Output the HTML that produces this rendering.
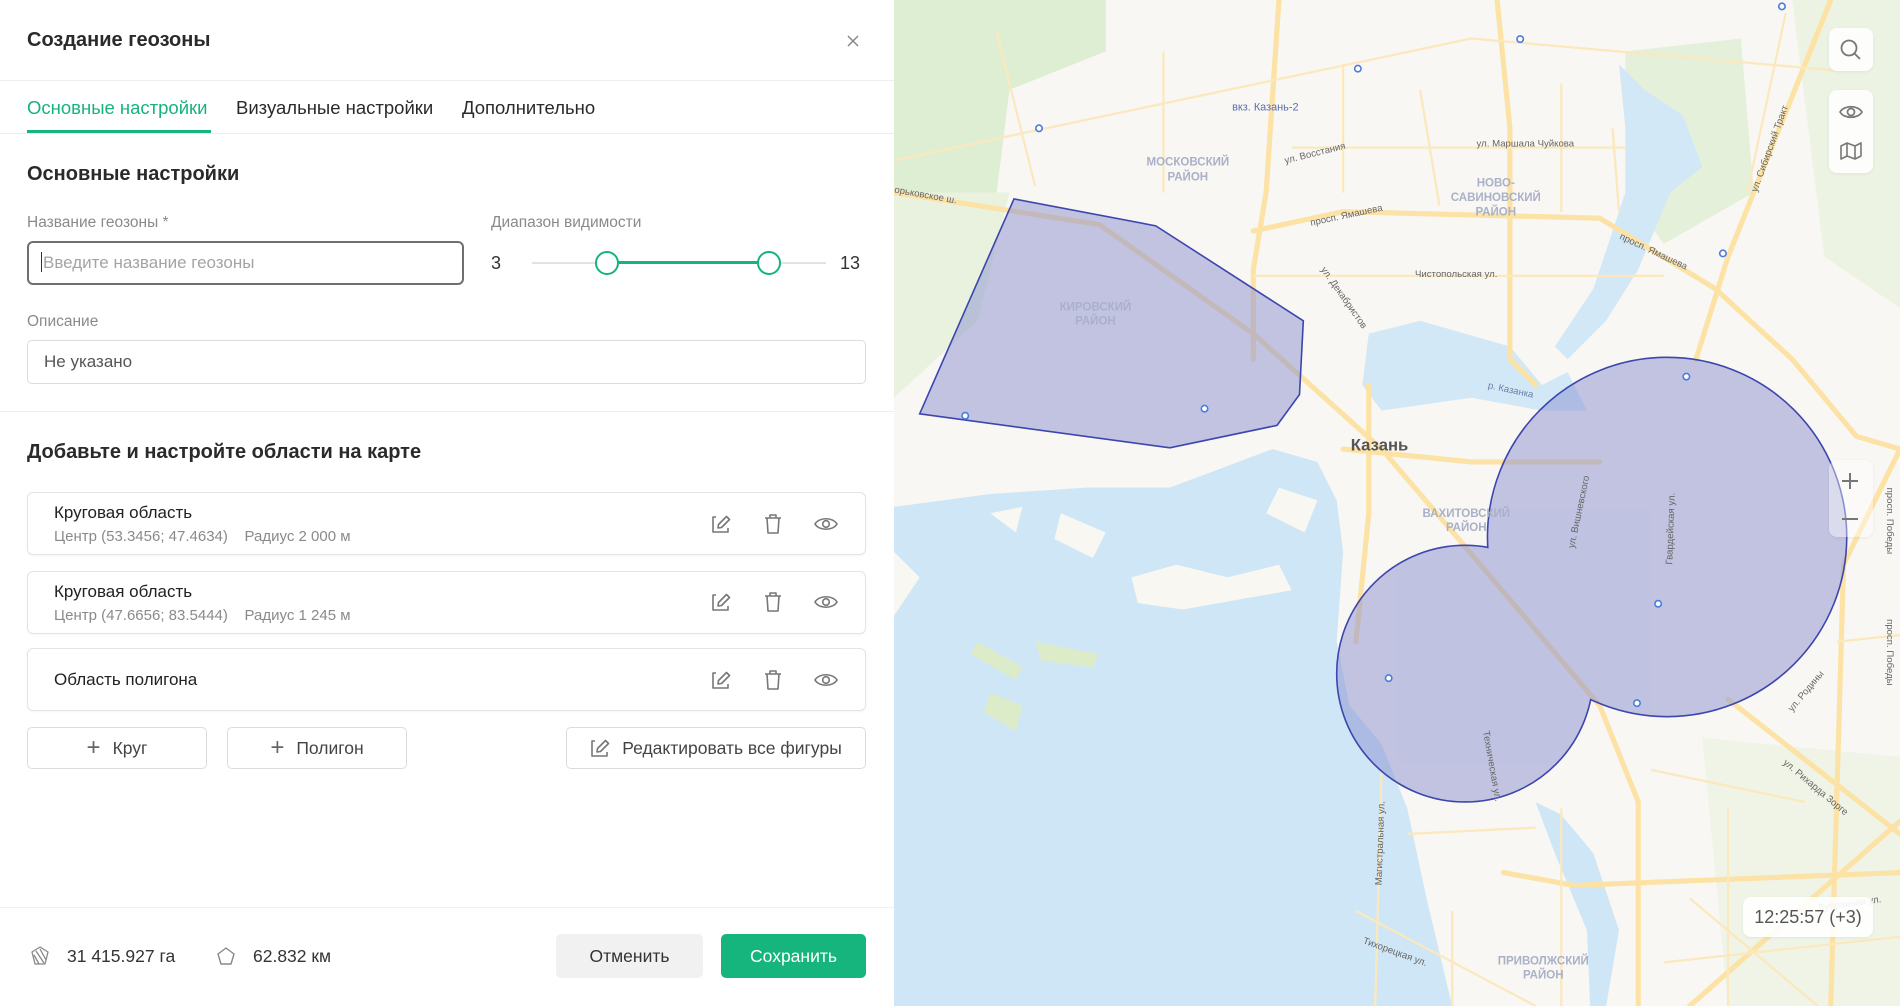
<!DOCTYPE html>
<html><head><meta charset="utf-8"><style>
*{box-sizing:border-box;margin:0;padding:0}
body{width:1900px;height:1006px;overflow:hidden;font-family:"Liberation Sans",sans-serif;background:#fff;position:relative;color:#222}
.a{position:absolute;white-space:nowrap}
.panel{position:absolute;left:0;top:0;width:894px;height:1006px;background:#fff}
.hr{position:absolute;left:0;width:894px;height:1px;background:#eeeeee}
.lbl{font-size:15.5px;color:#8a8a8a}
.inp{position:absolute;border:1px solid #dcdcdc;border-radius:5px;background:#fff}
.card{position:absolute;left:27px;width:839px;height:63px;border:1px solid #e4e4e4;border-radius:6px;box-shadow:0 1px 2px rgba(0,0,0,.04)}
.ct{position:absolute;left:26px;font-size:17px;color:#222}
.cs{position:absolute;left:26px;top:35px;font-size:15px;color:#8a8a8a}
.btn{position:absolute;top:727px;height:42px;border:1px solid #dcdcdc;border-radius:5px;font-size:17.5px;color:#444;display:flex;align-items:center;justify-content:center;gap:12px}
.mc{position:absolute;background:rgba(255,255,255,.9);border-radius:8px;box-shadow:0 1px 3px rgba(0,0,0,.06)}
</style></head><body>
<div class="panel">
 <div class="a" style="left:27px;top:29px;font-size:20px;font-weight:bold;color:#2a2a2a">Создание геозоны</div>
 <svg class="a" style="left:846px;top:34px" width="14" height="14" viewBox="0 0 14 14"><path d="M2 2L12 12M12 2L2 12" stroke="#888" stroke-width="1.5"/></svg>
 <div class="hr" style="top:80px"></div>
 <div class="a" style="left:27px;top:97px;font-size:18.5px;color:#17b37c">Основные настройки</div>
 <div class="a" style="left:27px;top:130px;width:184px;height:3px;background:#17b37c"></div>
 <div class="a" style="left:236px;top:97px;font-size:18.5px;color:#2a2a2a">Визуальные настройки</div>
 <div class="a" style="left:462px;top:97px;font-size:18.5px;color:#2a2a2a">Дополнительно</div>
 <div class="hr" style="top:133px"></div>
 <div class="a" style="left:27px;top:163px;font-size:20px;font-weight:bold;color:#2a2a2a">Основные настройки</div>
 <div class="a lbl" style="left:27px;top:214px">Название геозоны *</div>
 <div class="inp" style="left:27px;top:241px;width:437px;height:44px;border:2px solid #6f6f6f;border-radius:6px"></div>
 <div class="a" style="left:41px;top:252px;width:1px;height:20px;background:#333"></div>
 <div class="a" style="left:43px;top:253px;font-size:17px;color:#a4a4a4">Введите название геозоны</div>
 <div class="a lbl" style="left:491px;top:214px">Диапазон видимости</div>
 <div class="a" style="left:491px;top:253px;font-size:18px;color:#333">3</div>
 <div class="a" style="left:532px;top:262px;width:294px;height:2px;background:#e2e2e2"></div>
 <div class="a" style="left:607px;top:261px;width:162px;height:3px;background:#17b37c"></div>
 <div class="a" style="left:595px;top:251px;width:24px;height:24px;border:2.5px solid #17b37c;border-radius:50%;background:#fff"></div>
 <div class="a" style="left:757px;top:251px;width:24px;height:24px;border:2.5px solid #17b37c;border-radius:50%;background:#fff"></div>
 <div class="a" style="left:840px;top:253px;font-size:18px;color:#333">13</div>
 <div class="a lbl" style="left:27px;top:313px">Описание</div>
 <div class="inp" style="left:27px;top:340px;width:839px;height:44px"></div>
 <div class="a" style="left:44px;top:352px;font-size:17px;color:#555">Не указано</div>
 <div class="hr" style="top:411px"></div>
 <div class="a" style="left:27px;top:441px;font-size:20px;font-weight:bold;color:#2a2a2a">Добавьте и настройте области на карте</div>

 <div class="card" style="top:492px"><div class="ct" style="top:10px">Круговая область</div><div class="cs">Центр (53.3456; 47.4634)&nbsp;&nbsp;&nbsp;&nbsp;Радиус 2 000 м</div></div>
 <div class="card" style="top:571px"><div class="ct" style="top:10px">Круговая область</div><div class="cs">Центр (47.6656; 83.5444)&nbsp;&nbsp;&nbsp;&nbsp;Радиус 1 245 м</div></div>
 <div class="card" style="top:648px"><div class="ct" style="top:21px">Область полигона</div></div>

 <svg class="a" style="left:0;top:0" width="894" height="1006">
  <defs>
   <g id="ed"><path d="M-5 -7H-8V8H7V4" fill="none" stroke="#777" stroke-width="1.6" stroke-linejoin="round"/><path d="M-3 4L-2.5 0.5L5.5 -7.5L8.5 -4.5L0.5 3.5Z" fill="none" stroke="#777" stroke-width="1.6" stroke-linejoin="round"/></g>
   <g id="tr"><path d="M-8 -6H8M-3 -6V-9H3V-6M-6 -6L-5 9H5L6 -6" fill="none" stroke="#777" stroke-width="1.6" stroke-linejoin="round"/></g>
   <g id="ey"><path d="M-11 0C-7 -7 7 -7 11 0C7 7 -7 7 -11 0Z" fill="none" stroke="#777" stroke-width="1.6"/><circle r="3.3" fill="none" stroke="#777" stroke-width="1.6"/></g>
  </defs>
  <use href="#ed" x="721" y="524"/><use href="#tr" x="773" y="524"/><use href="#ey" x="826" y="524"/>
  <use href="#ed" x="721" y="602"/><use href="#tr" x="773" y="602"/><use href="#ey" x="826" y="602"/>
  <use href="#ed" x="721" y="680"/><use href="#tr" x="773" y="680"/><use href="#ey" x="826" y="680"/>
 </svg>

 <div class="btn" style="left:27px;width:180px"><span style="font-size:24px;font-weight:300;color:#666">+</span>Круг</div>
 <div class="btn" style="left:227px;width:180px"><span style="font-size:24px;font-weight:300;color:#666">+</span>Полигон</div>
 <div class="btn" style="left:566px;width:300px"><svg width="20" height="20" viewBox="-10 -10 20 20"><use href="#ed"/></svg>Редактировать все фигуры</div>

 <div class="hr" style="top:907px;background:#f0f0f0"></div>
 <svg class="a" style="left:30px;top:946px" width="20" height="20" viewBox="0 0 20 20"><path d="M10 1L18 6L15 18H5L2 6Z M6 5L14 17 M10 3L16 14 M4 9L9 18" fill="none" stroke="#888" stroke-width="1.3" stroke-linejoin="round"/></svg>
 <div class="a" style="left:67px;top:946px;font-size:17.5px;color:#333">31 415.927 га</div>
 <svg class="a" style="left:216px;top:946px" width="20" height="20" viewBox="0 0 20 20"><path d="M10 2L18 8L15 18H5L2 8Z" fill="none" stroke="#888" stroke-width="1.4" stroke-linejoin="round"/></svg>
 <div class="a" style="left:253px;top:946px;font-size:17.5px;color:#333">62.832 км</div>
 <div class="a" style="left:556px;top:934px;width:147px;height:44px;background:#f1f1f1;border-radius:5px;font-size:17.5px;color:#333;display:flex;align-items:center;justify-content:center">Отменить</div>
 <div class="a" style="left:721px;top:934px;width:145px;height:44px;background:#16b57d;border-radius:5px;font-size:17.5px;color:#fff;display:flex;align-items:center;justify-content:center">Сохранить</div>
</div>

<svg class="a" style="left:894px;top:0" width="1006" height="1006" viewBox="0 0 1568 1568">
 <rect width="1568" height="1568" fill="#f8f7f3"/>
 <path d="M0 0H330V80L180 140L160 300L0 300Z" fill="#deeed3"/>
 <path d="M0 300L180 300L130 500L0 620Z" fill="#e9f2de"/>
 <path d="M1140 80L1320 60L1340 300L1200 380L1140 300Z" fill="#e4f0d9"/>
 <path d="M1400 0H1568V480L1450 400Z" fill="#ecf3e2"/>
 <path d="M1260 1150L1568 1180V1568H1300Z" fill="#ebf2e1" opacity=".7"/>
 <path d="M0 790L150 770L300 760L430 760L590 700L660 720L690 780L700 860L690 1000L710 1100L760 1160L800 1260L830 1400L870 1568H0Z" fill="#cfe6f6"/>
 <path d="M740 520L820 500L960 540L1010 600L1050 580L1080 640L1010 640L900 620L760 640L730 600Z" fill="#d3e8f6"/>
 <path d="M1130 100L1170 140L1230 180L1260 260L1210 300L1160 420L1110 500L1050 560L1030 540L1090 450L1140 300L1140 200Z" fill="#d3e8f6"/>
 <path d="M1000 1250L1040 1270L1090 1330L1130 1450L1110 1568H1085L1080 1450L1030 1330Z" fill="#cfe6f6"/>
 <g fill="#f8f7f2">
  <path d="M260 800L330 830L310 870L250 840Z"/><path d="M370 900L440 880L520 900L600 880L620 920L450 950L380 940Z"/>
  <path d="M150 800L200 790L190 830Z"/><path d="M600 760L660 780L640 830L580 800Z"/><path d="M0 860L40 900L0 960Z"/>
 </g>
 <g fill="#dcecc8"><path d="M130 1000L200 1040L190 1060L120 1020Z"/><path d="M220 1000L320 1020L310 1040L230 1030Z"/><path d="M150 1080L200 1100L190 1140L140 1110Z"/></g>
 <g fill="none" stroke="#fce2a4" stroke-width="8" stroke-linecap="round">
  <path d="M600 0L580 300L560 420L560 560"/><path d="M940 0L960 200L960 560L1000 600"/>
  <path d="M0 300L320 350L560 520L760 700L880 840L1100 1100L1160 1250L1160 1568"/>
  <path d="M560 360L700 330L1100 340L1280 450L1400 560L1500 680L1568 700"/>
  <path d="M1460 0L1300 400L1250 560"/><path d="M1568 700L1480 880L1460 1568"/>
  <path d="M1568 1280L1240 1568"/><path d="M700 700L900 720L1100 720"/><path d="M740 600L740 800L720 1000"/>
  <path d="M950 1360L1060 1380L1568 1360"/><path d="M1300 1090L1568 1300"/>
 </g>
 <g fill="none" stroke="#fbe8bd" stroke-width="3.5">
  <path d="M160 50L220 290"/><path d="M0 250L900 60L1470 110"/><path d="M620 230L1140 230"/><path d="M560 430L1200 430"/><path d="M420 80L420 300"/>
  <path d="M1040 130L1040 330"/><path d="M700 100L700 300"/><path d="M760 1200L750 1568"/><path d="M1040 1260L1040 1568"/><path d="M720 1420L1000 1568"/><path d="M1200 1500L1568 1460"/>
  <path d="M820 140L850 320"/><path d="M1120 200L1130 330"/><path d="M1180 1200L1420 1250"/><path d="M1300 1260L1300 1568"/><path d="M800 1300L1000 1290"/>
  <path d="M1390 20L1330 300"/><path d="M1470 1000L1568 990"/><path d="M1240 1400L1440 1568"/><path d="M870 1420L870 1568"/>
 </g>
 <defs>
  <mask id="m1"><rect width="1568" height="1568" fill="#fff"/><circle cx="890" cy="1050" r="199" fill="#000"/></mask>
  <mask id="m2"><rect width="1568" height="1568" fill="#fff"/><circle cx="1205" cy="837" r="279" fill="#000"/></mask>
 </defs>
 <path d="M187 310L408 352L638 500L632 615L597 663L430 698L40 645Z" fill="#8a8fd0" fill-opacity=".5" stroke="#3c46ae" stroke-width="2.5"/>
 <g opacity=".5" fill="#8a8fd0"><circle cx="1205" cy="837" r="280"/><circle cx="890" cy="1050" r="200"/></g>
 <circle cx="1205" cy="837" r="280" fill="none" stroke="#3c46ae" stroke-width="2.5" mask="url(#m1)"/>
 <circle cx="890" cy="1050" r="200" fill="none" stroke="#3c46ae" stroke-width="2.5" mask="url(#m2)"/>
 <g fill="#fff" stroke="#4a7be0" stroke-width="2.5">
  <circle cx="226" cy="200" r="5"/><circle cx="723" cy="107" r="5"/><circle cx="976" cy="61" r="5"/><circle cx="1384" cy="10" r="5"/><circle cx="1292" cy="395" r="5"/>
  <circle cx="111" cy="648" r="5"/><circle cx="484" cy="637" r="5"/><circle cx="1235" cy="587" r="5"/><circle cx="1191" cy="941" r="5"/><circle cx="771" cy="1057" r="5"/><circle cx="1158" cy="1096" r="5"/>
 </g>
 <g font-family="Liberation Sans,sans-serif">
  <text x="712" y="702" font-size="26" font-weight="bold" fill="#555">Казань</text>
  <g font-size="18" font-weight="bold" fill="#aab0c8" text-anchor="middle">
   <text x="458" y="258">МОСКОВСКИЙ</text><text x="458" y="281">РАЙОН</text>
   <text x="938" y="291">НОВО-</text><text x="938" y="313">САВИНОВСКИЙ</text><text x="938" y="336">РАЙОН</text>
   <text x="314" y="484">КИРОВСКИЙ</text><text x="314" y="506">РАЙОН</text>
   <text x="892" y="806">ВАХИТОВСКИЙ</text><text x="892" y="828">РАЙОН</text>
   <text x="1012" y="1503">ПРИВОЛЖСКИЙ</text><text x="1012" y="1525">РАЙОН</text>
  </g>
  <g font-size="15" fill="#666">
   <text x="527" y="172" fill="#5b6fa8" font-size="17">вкз. Казань-2</text>
   <text x="908" y="228">ул. Маршала Чуйкова</text>
   <text x="812" y="432">Чистопольская ул.</text>
   <text x="650" y="352" transform="rotate(-12 650 352)">просп. Ямашева</text>
   <text x="610" y="255" transform="rotate(-14 610 255)">ул. Восстания</text>
   <text x="1130" y="372" transform="rotate(25 1130 372)">просп. Ямашева</text>
   <text x="1548" y="760" transform="rotate(90 1548 760)">просп. Победы</text>
   <text x="1548" y="965" transform="rotate(90 1548 965)">просп. Победы</text>
   <text x="1440" y="1420" transform="rotate(-8 1440 1420)">Дубравная ул.</text>
   <text x="0" y="300" transform="rotate(10 0 300)">орьковское ш.</text>
   <text x="925" y="605" transform="rotate(12 925 605)" fill="#6a7fa8">р. Казанка</text>
   <text x="1060" y="855" transform="rotate(-78 1060 855)">ул. Вишневского</text>
   <text x="1213" y="880" transform="rotate(-88 1213 880)">Гвардейская ул.</text>
   <text x="918" y="1140" transform="rotate(80 918 1140)">Техническая ул.</text>
   <text x="665" y="420" transform="rotate(55 665 420)">ул. Декабристов</text>
   <text x="1345" y="300" transform="rotate(-70 1345 300)">ул. Сибирский Тракт</text>
   <text x="1400" y="1110" transform="rotate(-50 1400 1110)">ул. Родины</text>
   <text x="1385" y="1190" transform="rotate(40 1385 1190)">ул. Рихарда Зорге</text>
   <text x="730" y="1470" transform="rotate(20 730 1470)">Тихорецкая ул.</text>
   <text x="760" y="1380" transform="rotate(-88 760 1380)">Магистральная ул.</text>
  </g>
 </g>
</svg>

<div class="mc" style="left:1829px;top:28px;width:44px;height:43px"><svg width="44" height="43" viewBox="0 0 44 43"><circle cx="20" cy="20" r="7.5" fill="none" stroke="#777" stroke-width="1.8"/><path d="M25.5 25.5L31 31" stroke="#777" stroke-width="1.8"/></svg></div>
<div class="mc" style="left:1829px;top:90px;width:44px;height:83px"><svg width="44" height="83" viewBox="0 0 44 83"><path d="M11 22C15 15 29 15 33 22C29 29 15 29 11 22Z" fill="none" stroke="#777" stroke-width="1.7"/><circle cx="22" cy="22" r="3.5" fill="none" stroke="#777" stroke-width="1.7"/><path d="M12 56L18 53L26 56L32 53V66L26 69L18 66L12 69Z M18 53V66 M26 56V69" fill="none" stroke="#777" stroke-width="1.6" stroke-linejoin="round"/></svg></div>
<div class="mc" style="left:1829px;top:460px;width:44px;height:77px;background:rgba(255,255,255,.4)"><div class="a" style="left:13px;top:20px;width:16px;height:1.5px;background:#777"></div><div class="a" style="left:20.3px;top:13px;width:1.5px;height:16px;background:#777"></div><div class="a" style="left:13px;top:58px;width:16px;height:1.5px;background:#777"></div></div>
<div class="mc" style="left:1743px;top:897px;width:130px;height:40px;font-size:18px;color:#555;display:flex;align-items:center;justify-content:center">12:25:57 (+3)</div>
</body></html>
